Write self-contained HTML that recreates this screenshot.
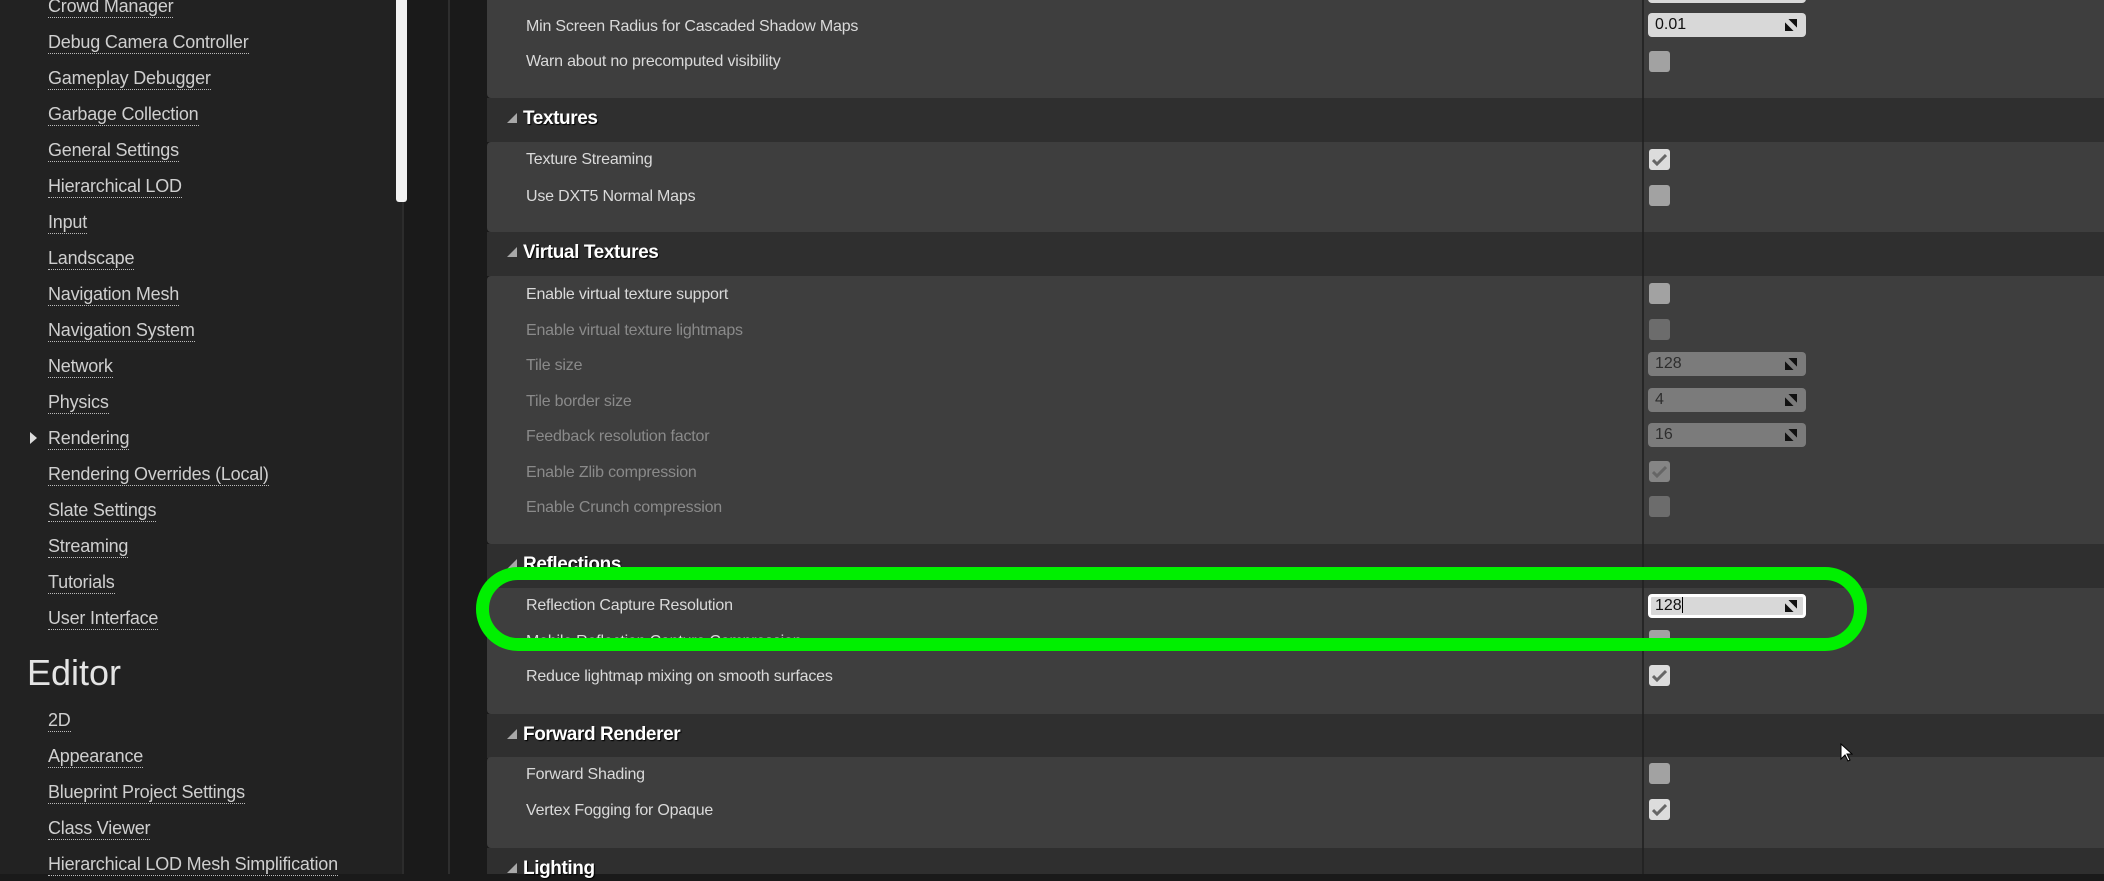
<!DOCTYPE html>
<html><head><meta charset="utf-8">
<style>
*{margin:0;padding:0;box-sizing:border-box}
body{width:2104px;height:874px;overflow:hidden;background:#1a1a1a;position:relative;font-family:"Liberation Sans",Arial,sans-serif}
.sb{position:absolute;left:0;top:0;width:402px;height:874px;background:#222}
.sbl{position:absolute;left:402px;top:0;width:2px;height:874px;background:#2c2c2c}
.scroll{position:absolute;left:396px;top:0;width:11px;height:202px;background:#f2f2f2;border-radius:0 0 3px 3px}
.vl{position:absolute;left:448px;top:0;width:2px;height:874px;background:#2e2e2e}
.lnk{position:absolute;left:48px;color:#cfcfcf;font-size:18px;line-height:20px;height:22px;white-space:nowrap;border-bottom:1px dotted #bbb;letter-spacing:-0.2px}
.ed{position:absolute;left:27px;top:651px;color:#e4e4e4;font-size:36px;line-height:44px}
.panel{position:absolute;left:487px;width:1617px;background:#3e3e3e;border-radius:4px 0 0 4px}
.hdr{position:absolute;left:487px;width:1617px;height:44px;background:#2f2f2f}
.ht{position:absolute;left:523px;color:#fff;font-weight:bold;font-size:19px;line-height:24px;text-shadow:1px 1px 1px #000;letter-spacing:-0.4px}
.tri{position:absolute;left:507px;width:0;height:0;border-left:10px solid transparent;border-bottom:10px solid #a8a8a8}
.rt{position:absolute;left:526px;color:#dadada;font-size:16px;line-height:20px;white-space:nowrap;letter-spacing:-0.2px;margin-top:2px}
.dim{color:#8a8a8a}
.div{position:absolute;left:1642px;width:2px;background:#262626}
.cb{position:absolute;left:1649px;width:21px;height:21px;border-radius:3px;background:#a2a2a2}
.cb.d{background:#6c6c6c}
.cb.c{background:#dcdcdc}
.cb.c.d{background:#858585}
.cb svg{position:absolute;left:3px;top:4px}
.inp{position:absolute;left:1648px;width:158px;height:24px;border-radius:4px;background:#d8d8d8;color:#111;font-size:16px;line-height:24px;padding-left:7px}
.inp.d{background:#7b7b7b;color:#2e2e2e}
.inp.f{border:3px solid #fff;line-height:18px;padding-left:4px}
.inp svg{position:absolute;right:9px;top:6px}
.inp.f svg{right:6px;top:3px}
.green{position:absolute;left:476px;top:567px;width:1391px;height:84px;border:13px solid #00f000;border-radius:42px}
</style></head><body>
<div class="sb"></div>
<div class="sbl"></div>
<div class="scroll"></div>
<div class="vl"></div>

<div class="lnk" style="top:-4px">Crowd Manager</div>
<div class="lnk" style="top:32px">Debug Camera Controller</div>
<div class="lnk" style="top:68px">Gameplay Debugger</div>
<div class="lnk" style="top:104px">Garbage Collection</div>
<div class="lnk" style="top:140px">General Settings</div>
<div class="lnk" style="top:176px">Hierarchical LOD</div>
<div class="lnk" style="top:212px">Input</div>
<div class="lnk" style="top:248px">Landscape</div>
<div class="lnk" style="top:284px">Navigation Mesh</div>
<div class="lnk" style="top:320px">Navigation System</div>
<div class="lnk" style="top:356px">Network</div>
<div class="lnk" style="top:392px">Physics</div>
<div style="position:absolute;left:30px;top:432px;width:0;height:0;border-top:6px solid transparent;border-bottom:6px solid transparent;border-left:7px solid #ddd"></div>
<div class="lnk" style="top:428px">Rendering</div>
<div class="lnk" style="top:464px">Rendering Overrides (Local)</div>
<div class="lnk" style="top:500px">Slate Settings</div>
<div class="lnk" style="top:536px">Streaming</div>
<div class="lnk" style="top:572px">Tutorials</div>
<div class="lnk" style="top:608px">User Interface</div>
<div class="ed">Editor</div>
<div class="lnk" style="top:710px">2D</div>
<div class="lnk" style="top:746px">Appearance</div>
<div class="lnk" style="top:782px">Blueprint Project Settings</div>
<div class="lnk" style="top:818px">Class Viewer</div>
<div class="lnk" style="top:854px">Hierarchical LOD Mesh Simplification</div>

<div class="panel" style="top:0;height:98px;border-radius:0 0 0 4px"></div>
<div class="hdr" style="top:98px"></div>
<div class="panel" style="top:142px;height:90px"></div>
<div class="hdr" style="top:232px"></div>
<div class="panel" style="top:276px;height:268px"></div>
<div class="hdr" style="top:544px"></div>
<div class="panel" style="top:588px;height:126px"></div>
<div class="hdr" style="top:714px"></div>
<div class="panel" style="top:757px;height:91px"></div>
<div class="hdr" style="top:848px;height:26px"></div>

<div class="div" style="top:0;height:98px"></div>
<div class="div" style="top:98px;height:44px;background:#232323"></div>
<div class="div" style="top:142px;height:90px"></div>
<div class="div" style="top:232px;height:44px;background:#232323"></div>
<div class="div" style="top:276px;height:268px"></div>
<div class="div" style="top:544px;height:44px;background:#232323"></div>
<div class="div" style="top:588px;height:126px"></div>
<div class="div" style="top:714px;height:43px;background:#232323"></div>
<div class="div" style="top:757px;height:91px"></div>
<div class="div" style="top:848px;height:26px;background:#232323"></div>

<div class="inp" style="top:-21px"></div>

<div class="rt" style="top:15px">Min Screen Radius for Cascaded Shadow Maps</div>
<div class="inp" style="top:13px">0.01<svg width="12" height="12" viewBox="0 0 14 14"><path d="M4 0H14V10Z" fill="#111"/><path d="M0 4L10 14H0Z" fill="#111"/></svg></div>
<div class="rt" style="top:50px">Warn about no precomputed visibility</div>
<div class="cb" style="top:51px"></div>

<div class="tri" style="top:113px"></div>
<div class="ht" style="top:107px">Textures</div>
<div class="rt" style="top:148px">Texture Streaming</div>
<div class="cb c" style="top:149px"><svg width="15" height="13" viewBox="0 0 15 13"><path d="M1 7L5 11L14 2" stroke="#666" stroke-width="3" fill="none"/></svg></div>
<div class="rt" style="top:185px">Use DXT5 Normal Maps</div>
<div class="cb" style="top:185px"></div>

<div class="tri" style="top:247px"></div>
<div class="ht" style="top:241px">Virtual Textures</div>
<div class="rt" style="top:283px">Enable virtual texture support</div>
<div class="cb" style="top:283px"></div>
<div class="rt dim" style="top:319px">Enable virtual texture lightmaps</div>
<div class="cb d" style="top:319px"></div>
<div class="rt dim" style="top:354px">Tile size</div>
<div class="inp d" style="top:352px">128<svg width="12" height="12" viewBox="0 0 14 14"><path d="M4 0H14V10Z" fill="#111"/><path d="M0 4L10 14H0Z" fill="#111"/></svg></div>
<div class="rt dim" style="top:390px">Tile border size</div>
<div class="inp d" style="top:388px">4<svg width="12" height="12" viewBox="0 0 14 14"><path d="M4 0H14V10Z" fill="#111"/><path d="M0 4L10 14H0Z" fill="#111"/></svg></div>
<div class="rt dim" style="top:425px">Feedback resolution factor</div>
<div class="inp d" style="top:423px">16<svg width="12" height="12" viewBox="0 0 14 14"><path d="M4 0H14V10Z" fill="#111"/><path d="M0 4L10 14H0Z" fill="#111"/></svg></div>
<div class="rt dim" style="top:461px">Enable Zlib compression</div>
<div class="cb c d" style="top:461px"><svg width="15" height="13" viewBox="0 0 15 13"><path d="M1 7L5 11L14 2" stroke="#666" stroke-width="3" fill="none"/></svg></div>
<div class="rt dim" style="top:496px">Enable Crunch compression</div>
<div class="cb d" style="top:496px"></div>

<div class="tri" style="top:559px"></div>
<div class="ht" style="top:553px">Reflections</div>
<div class="rt" style="top:594px">Reflection Capture Resolution</div>
<div class="inp f" style="top:594px">128<span style="display:inline-block;width:1px;height:16px;background:#000;vertical-align:-3px"></span><svg width="12" height="12" viewBox="0 0 14 14"><path d="M4 0H14V10Z" fill="#111"/><path d="M0 4L10 14H0Z" fill="#111"/></svg></div>
<div class="rt" style="top:630px">Mobile Reflection Capture Compression</div>
<div class="cb" style="top:630px"></div>
<div class="rt" style="top:665px">Reduce lightmap mixing on smooth surfaces</div>
<div class="cb c" style="top:665px"><svg width="15" height="13" viewBox="0 0 15 13"><path d="M1 7L5 11L14 2" stroke="#666" stroke-width="3" fill="none"/></svg></div>

<div class="tri" style="top:729px"></div>
<div class="ht" style="top:723px">Forward Renderer</div>
<div class="rt" style="top:763px">Forward Shading</div>
<div class="cb" style="top:763px"></div>
<div class="rt" style="top:799px">Vertex Fogging for Opaque</div>
<div class="cb c" style="top:799px"><svg width="15" height="13" viewBox="0 0 15 13"><path d="M1 7L5 11L14 2" stroke="#666" stroke-width="3" fill="none"/></svg></div>

<div class="tri" style="top:863px"></div>
<div class="ht" style="top:857px">Lighting</div>

<div class="green"></div>

<svg style="position:absolute;left:1840px;top:743px" width="13" height="20" viewBox="0 0 13 20"><path d="M1 1V16L5 12L8 18L10 17L7 11H12Z" fill="#fff" stroke="#000" stroke-width="1"/></svg>
</body></html>
